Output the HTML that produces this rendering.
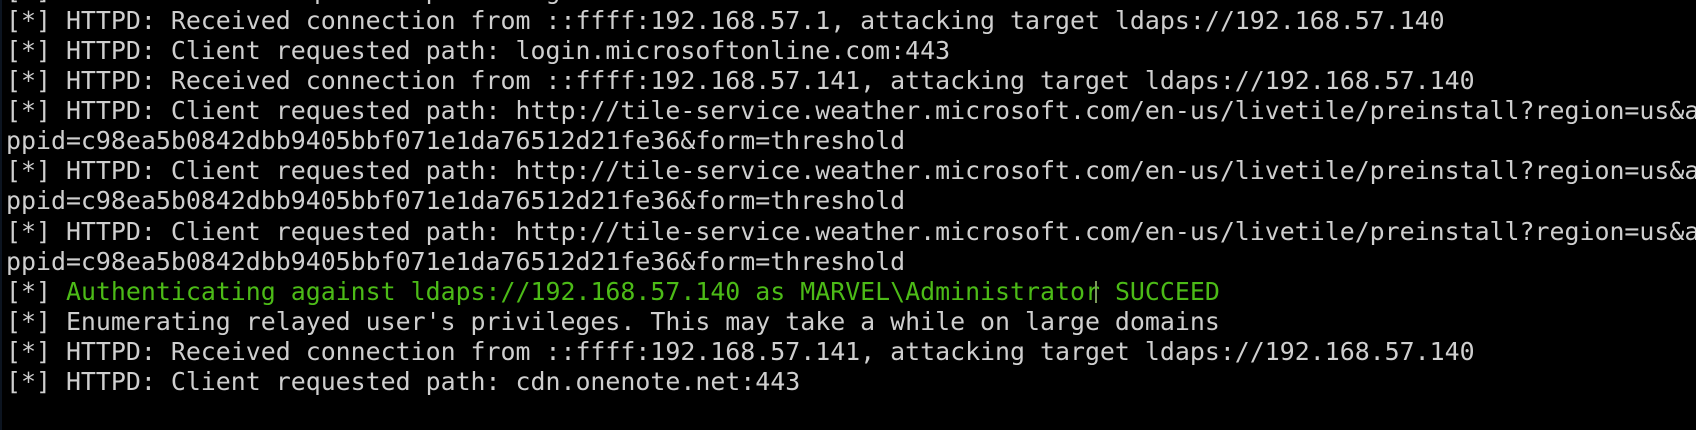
<!DOCTYPE html>
<html><head><style>
html,body{margin:0;padding:0;background:#000;width:1696px;height:430px;overflow:hidden}
body{border-left:2px solid #0c1420;box-sizing:border-box}
pre{margin:0;position:absolute;left:6px;top:-24px;font-family:"DejaVu Sans Mono","Liberation Mono",monospace;font-size:24.9px;line-height:30.07px;color:#cfcfcf;white-space:pre}
.g{color:#4cbb17}
.c{display:inline-block;width:2px;height:22px;background:#7a9a5a;vertical-align:-3px;margin-left:-5px;margin-right:3px}
</style></head><body><pre>[*] HTTPD: Client requested path: login.microsoftonline.com:443
[*] HTTPD: Received connection from ::ffff:192.168.57.1, attacking target ldaps://192.168.57.140
[*] HTTPD: Client requested path: login.microsoftonline.com:443
[*] HTTPD: Received connection from ::ffff:192.168.57.141, attacking target ldaps://192.168.57.140
[*] HTTPD: Client requested path: http://tile-service.weather.microsoft.com/en-us/livetile/preinstall?region=us&a
ppid=c98ea5b0842dbb9405bbf071e1da76512d21fe36&form=threshold
[*] HTTPD: Client requested path: http://tile-service.weather.microsoft.com/en-us/livetile/preinstall?region=us&a
ppid=c98ea5b0842dbb9405bbf071e1da76512d21fe36&form=threshold
[*] HTTPD: Client requested path: http://tile-service.weather.microsoft.com/en-us/livetile/preinstall?region=us&a
ppid=c98ea5b0842dbb9405bbf071e1da76512d21fe36&form=threshold
[*] <span class="g">Authenticating against ldaps://192.168.57.140 as MARVEL\Administrator<span class="c"></span> SUCCEED</span>
[*] Enumerating relayed user's privileges. This may take a while on large domains
[*] HTTPD: Received connection from ::ffff:192.168.57.141, attacking target ldaps://192.168.57.140
[*] HTTPD: Client requested path: cdn.onenote.net:443
</pre></body></html>
